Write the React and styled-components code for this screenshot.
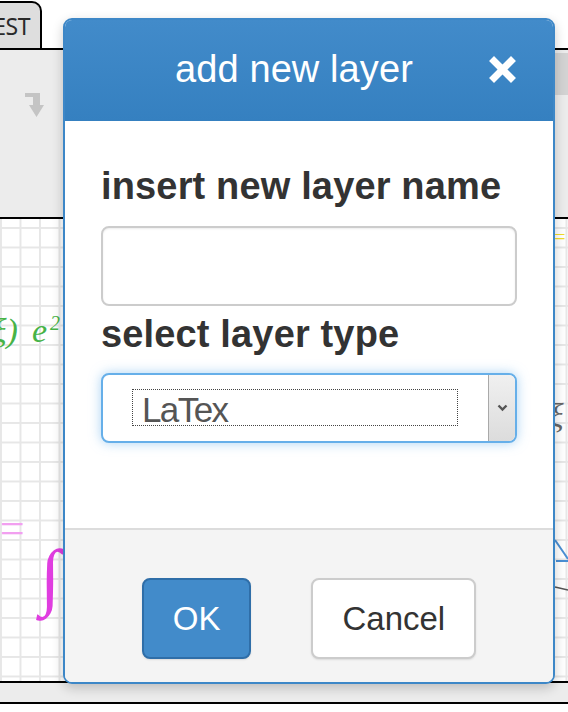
import React from 'react';
import styled, { createGlobalStyle } from 'styled-components';

const GlobalStyle = createGlobalStyle`
  html, body {
    margin: 0;
    padding: 0;
    background: #fff;
  }
  body {
    font-family: "Liberation Sans", Arial, sans-serif;
  }
`;

const Page = styled.div`
  position: relative;
  width: 568px;
  height: 712px;
  overflow: hidden;
  display: flex;
  flex-direction: column;
`;

/* ---------- editor behind the modal ---------- */

const TabBar = styled.div`
  height: 48px;
  border-bottom: 2px solid #000;
  display: flex;
  align-items: flex-end;
`;

const Tab = styled.div`
  width: 42px;
  height: 47px;
  box-sizing: border-box;
  background: #dedede;
  border-top: 2px solid #000;
  border-right: 2px solid #000;
  border-top-right-radius: 10px;
  display: flex;
  justify-content: flex-end;
  align-items: center;
  padding-right: 10px;
  overflow: hidden;
  font-family: "Noto Sans", sans-serif;
  font-size: 23px;
  letter-spacing: -0.5px;
  color: #2a2a2a;
  white-space: nowrap;
`;

const Toolbar = styled.div`
  height: 169px;
  background: #ececec;
  border-bottom: 2px solid #000;
  display: flex;
  align-items: flex-start;
  padding-top: 3px;
  box-sizing: border-box;
`;

const ToolIcon = styled.svg`
  margin: 40px 0 0 25px;
  fill: #c4c4c4;
`;

const ToolGroup = styled.div`
  margin-left: auto;
  width: 110px;
  height: 42px;
  background: #d3d3d3;
`;

const Canvas = styled.div`
  position: relative;
  height: 462px;
  border-bottom: 2px solid #000;
  background-color: #fff;
  background-image:
    linear-gradient(to right, #e7e7e7 2px, transparent 2px),
    linear-gradient(to bottom, #e7e7e7 2px, transparent 2px);
  background-size: 19.5px 19.5px;
  background-position: 0 8px;
`;

const Formula = styled.span`
  position: absolute;
  left: ${p => p.$x}px;
  top: ${p => p.$y}px;
  color: ${p => p.$color};
  font-family: "Liberation Serif", "DejaVu Serif", serif;
  font-style: italic;
  font-size: ${p => p.$size}px;
  line-height: ${p => p.$size}px;
  white-space: nowrap;
`;

const Sketch = styled.svg`
  position: absolute;
  left: ${p => p.$x}px;
  top: ${p => p.$y}px;
`;

const StatusBar = styled.div`
  height: 19px;
  background: #ececec;
  border-bottom: 2px solid #000;
`;

/* ---------- modal ---------- */

const Dialog = styled.div`
  position: absolute;
  left: 63px;
  top: 18px;
  width: 492px;
  height: 666px;
  box-sizing: border-box;
  border: 2px solid #3d87c7;
  border-radius: 9px;
  overflow: hidden;
  background: #fff;
  display: flex;
  flex-direction: column;
  box-shadow: 0 4px 12px rgba(0, 0, 0, 0.2);
`;

const Header = styled.div`
  height: 101px;
  flex-shrink: 0;
  display: flex;
  align-items: center;
  padding: 0 37px 2px 34px;
  box-sizing: border-box;
  background: linear-gradient(to bottom, #428bca, #3580c0);
`;

const Title = styled.h4`
  flex: 1;
  margin: 0;
  text-align: center;
  font-size: 38px;
  font-weight: 400;
  letter-spacing: 0.1px;
  color: #fff;
`;

const CloseButton = styled.button`
  width: 27px;
  height: 27px;
  padding: 0;
  border: none;
  background: none;
  display: flex;
  cursor: pointer;
`;

const Body = styled.div`
  height: 407px;
  flex-shrink: 0;
  box-sizing: border-box;
  padding: 43px 36px 0;
`;

const Label = styled.h3`
  margin: ${p => (p.$first ? '0' : '6px')} 0 0;
  font-size: 38px;
  line-height: 44px;
  font-weight: 700;
  letter-spacing: 0.15px;
  color: #333;
`;

const TextInput = styled.input`
  display: block;
  width: 100%;
  height: 80px;
  margin-top: 18px;
  box-sizing: border-box;
  border: 2px solid #ccc;
  border-radius: 8px;
  box-shadow: inset 0 1px 2px rgba(0, 0, 0, 0.08);
  outline: none;
  font-size: 32px;
  padding: 0 16px;
`;

const Select = styled.div`
  margin-top: 17px;
  height: 70px;
  box-sizing: border-box;
  border: 2px solid #66afe9;
  border-radius: 8px;
  box-shadow: 0 0 12px rgba(102, 175, 233, 0.55);
  display: flex;
  background: #fff;
`;

const SelectValue = styled.div`
  flex: 1;
  padding: 14px 30px 15px 29px;
  display: flex;
`;

const FocusRing = styled.div`
  flex: 1;
  height: 37px;
  box-sizing: border-box;
  border: 1px dotted #444;
  padding: 5px 0 0 9px;
  font-size: 35px;
  line-height: 30px;
  letter-spacing: -1.6px;
  color: #555;
`;

const SelectArrow = styled.div`
  width: 26px;
  border-left: 1px solid #a9a9a9;
  border-radius: 0 6px 6px 0;
  background: linear-gradient(to bottom, #f0f0f0, #dcdcdc);
  display: flex;
  align-items: center;
  justify-content: center;
`;

const Footer = styled.div`
  flex: 1;
  border-top: 2px solid #dcdcdc;
  background: #f4f4f4;
  display: flex;
  justify-content: center;
  align-items: flex-start;
  gap: 60px;
  padding-top: 48px;
`;

const Button = styled.button`
  height: 81px;
  padding: 0 29px;
  border-radius: 8px;
  border: 2px solid ${p => (p.$primary ? '#2f6ea8' : '#ccc')};
  background: ${p => (p.$primary ? '#428bca' : '#fff')};
  color: ${p => (p.$primary ? '#fff' : '#333')};
  font-family: "Liberation Sans", Arial, sans-serif;
  font-size: 33px;
  box-shadow: 0 1px 2px rgba(0, 0, 0, 0.1);
  cursor: pointer;
`;

function App() {
  return (
    <>
      <GlobalStyle />
      <Page>
        <TabBar>
          <Tab>EST</Tab>
        </TabBar>

        <Toolbar>
          <ToolIcon width="19" height="24" viewBox="0 0 19 24">
            <path d="M0 0 H15 V12 H19 L11.5 24 L4 12 H8 V4 H0 Z" />
          </ToolIcon>
          <ToolGroup />
        </Toolbar>

        <Canvas>
          <Formula $x={-8} $y={95} $size={34} $color="#47b347">ξ)</Formula>
          <Formula $x={32} $y={95} $size={34} $color="#47b347">e</Formula>
          <Formula $x={50} $y={94} $size={20} $color="#47b347">2</Formula>
          <Formula $x={-3} $y={288} $size={44} $color="#f29ff0">=</Formula>
          <Formula $x={40} $y={320} $size={74} $color="#e03de0">∫</Formula>
          <Formula $x={553} $y={8} $size={20} $color="#f1dd2a">=</Formula>
          <Formula $x={549} $y={180} $size={34} $color="#666">ξ</Formula>
          <Sketch $x={552} $y={316} width="16" height="60" viewBox="0 0 16 60">
            <path d="M3 5 L16 24" stroke="#4a8fd4" strokeWidth="2" fill="none" />
            <path d="M4 26 H16" stroke="#4a8fd4" strokeWidth="2" />
            <path d="M3 52 L16 55" stroke="#555" strokeWidth="1.5" />
          </Sketch>
        </Canvas>

        <StatusBar />

        <Dialog>
          <Header>
            <Title>add new layer</Title>
            <CloseButton aria-label="close">
              <svg width="27" height="27" viewBox="0 0 27 27">
                <path
                  d="M5 5 L22 22 M22 5 L5 22"
                  stroke="#fff"
                  strokeWidth="7"
                  strokeLinecap="square"
                  strokeLinejoin="round"
                />
              </svg>
            </CloseButton>
          </Header>

          <Body>
            <Label $first>insert new layer name</Label>
            <TextInput type="text" />
            <Label>select layer type</Label>
            <Select>
              <SelectValue>
                <FocusRing>LaTex</FocusRing>
              </SelectValue>
              <SelectArrow>
                <svg width="11" height="8" viewBox="0 0 11 8">
                  <path d="M1.5 1.5 L5.5 5.5 L9.5 1.5" stroke="#555" strokeWidth="2.4" fill="none" />
                </svg>
              </SelectArrow>
            </Select>
          </Body>

          <Footer>
            <Button $primary>OK</Button>
            <Button>Cancel</Button>
          </Footer>
        </Dialog>
      </Page>
    </>
  );
}

export default App;
